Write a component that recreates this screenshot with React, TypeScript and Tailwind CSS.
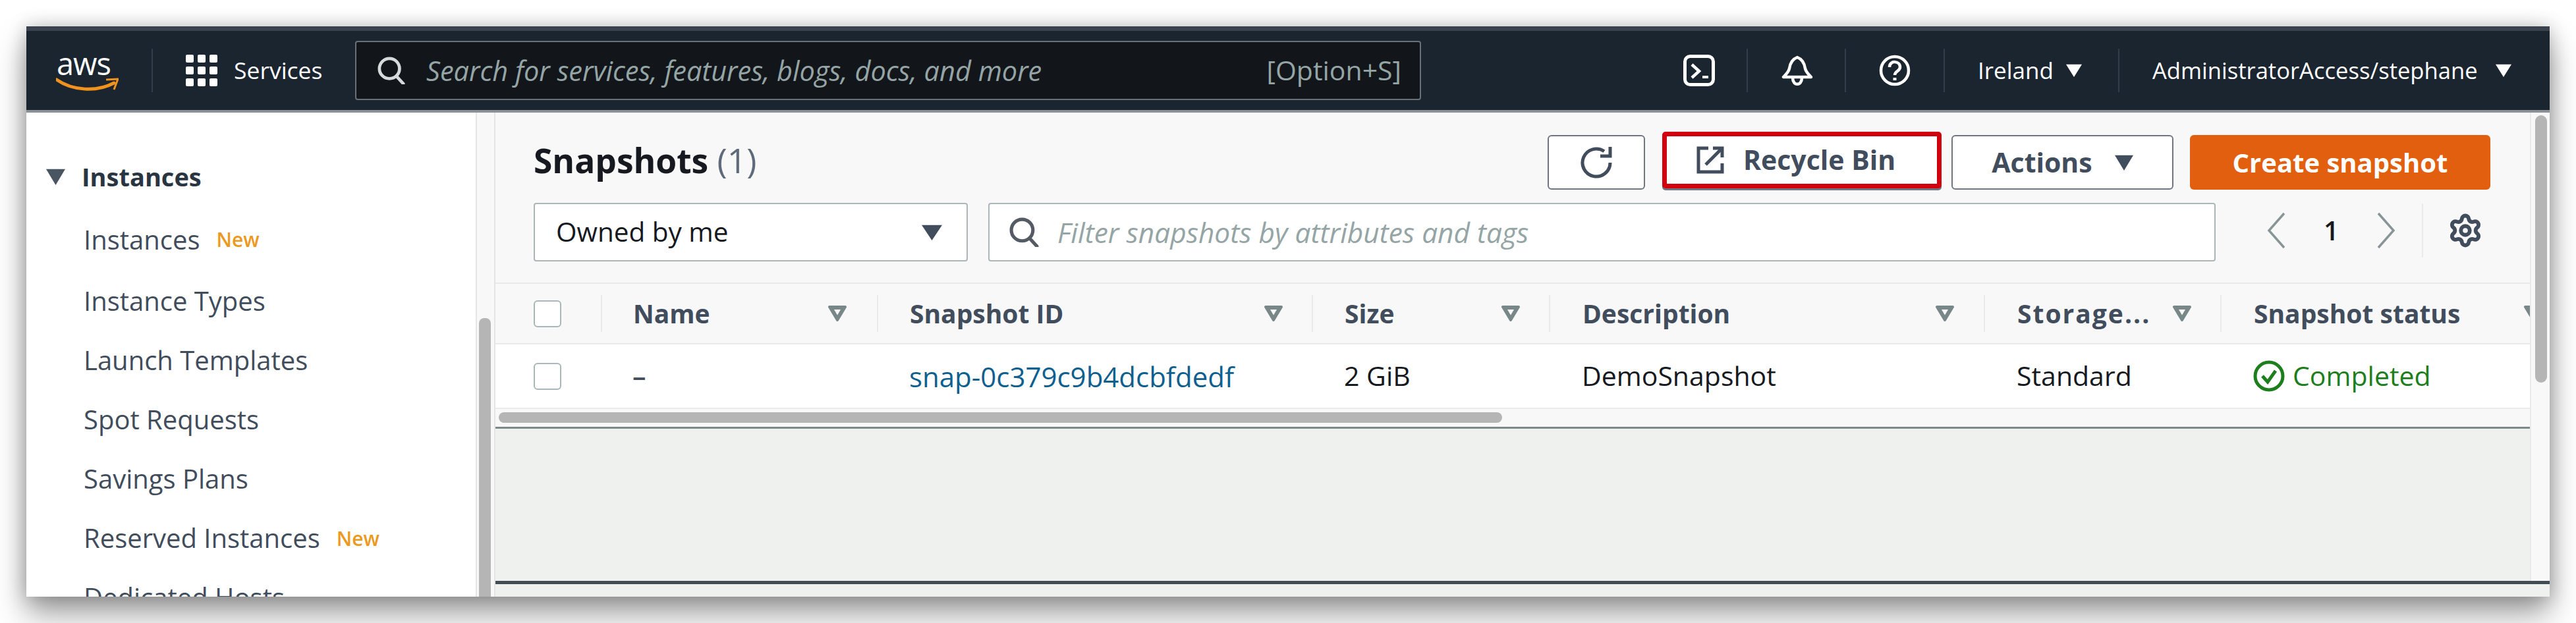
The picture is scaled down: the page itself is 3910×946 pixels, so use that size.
import { Settings } from 'lucide-react';

function Caret({ className }: { className: string }) {
  return (
    <svg viewBox="0 0 24 30" preserveAspectRatio="none" className={`${className} shrink-0`} fill="currentColor">
      <path d="M0 1h24L12 30z" />
    </svg>
  );
}

function FilterIcon() {
  return (
    <svg viewBox="0 0 30 26" className="w-[30px] h-[26px] text-[#788787] shrink-0" fill="none">
      <path d="M3 3h24L15 23z" fill="currentColor" stroke="currentColor" strokeWidth="4" strokeLinejoin="round" />
      <path d="M10 7h10l-5 8.500z" fill="#f8f8f8" />
    </svg>
  );
}

function SearchIcon({ className }: { className: string }) {
  return (
    <svg viewBox="0 0 44 44" className={`${className} shrink-0`} fill="none" stroke="currentColor" strokeWidth="5">
      <circle cx="19" cy="19" r="16" />
      <path d="M30 31l11 12" strokeLinecap="round" />
    </svg>
  );
}

function NavDivider() {
  return <div className="w-[2px] h-[66px] bg-[#333d49] shrink-0" />;
}

const navItems = ['Instance Types', 'Launch Templates', 'Spot Requests', 'Savings Plans'];

const columns = [
  { label: 'Name', w: 'w-[419px]', pad: 'pl-[47px] pr-[45px]', extra: '' },
  { label: 'Snapshot ID', w: 'w-[660px]', pad: 'pl-[48px] pr-[43px]', extra: '' },
  { label: 'Size', w: 'w-[360px]', pad: 'pl-[48px] pr-[43px]', extra: '' },
  { label: 'Description', w: 'w-[660px]', pad: 'pl-[49px] pr-[44px]', extra: '' },
  { label: 'Storage...', w: 'w-[359px]', pad: 'pl-[49px] pr-[43px]', extra: 'tracking-[2px]' },
];

export default function App() {
  return (
    <div className="w-[3910px] h-[946px] bg-white pl-[40px] pt-[40px] font-['Open_Sans',sans-serif] overflow-hidden">
      <div className="w-[3830px] h-[866px] flex flex-col overflow-hidden bg-white shadow-[0_0_26px_rgba(0,0,0,0.22),0_26px_44px_rgba(0,0,0,0.38)]">
        {/* top bar */}
        <header className="h-[131px] shrink-0 bg-[#1b2530] border-t-[7px] border-t-[#3a434d] border-b-[4px] border-b-[#8b9196] flex items-center text-white">
          <div className="w-[190px] pl-[45px] shrink-0 flex flex-col items-start">
            <span className="text-[47px] leading-[44px] tracking-[-1px] pl-[1px] font-normal">aws</span>
            <svg viewBox="0 0 95 22" className="w-[95px] h-[22px]" fill="none">
              <path d="M1 3C25 20 62 22 88 8" stroke="#f0931e" strokeWidth="5" strokeLinecap="round" />
              <path d="M76 3l18-1-6 16" stroke="#f0931e" strokeWidth="3" strokeLinejoin="round" />
            </svg>
          </div>
          <NavDivider />
          <div className="ml-[50px] w-[48px] grid grid-cols-3 gap-[6px] shrink-0">
            {Array.from({ length: 9 }).map((_, i) => (
              <span key={i} className="w-[12px] h-[12px] bg-white rounded-[2px]" />
            ))}
          </div>
          <span className="ml-[25px] w-[184px] text-[35.500px] shrink-0">Services</span>
          <div className="w-[1618px] h-[90px] shrink-0 flex items-center bg-[#121519] border-[2px] border-[#687078] rounded-[4px] pl-[32px] pr-[28px]">
            <SearchIcon className="w-[42px] h-[42px] text-[#d5dbdb]" />
            <span className="ml-[32px] flex-1 italic text-[#95a5a6] text-[41.500px]">Search for services, features, blogs, docs, and more</span>
            <span className="text-[#95a5a6] text-[41px]">[Option+S]</span>
          </div>
          {/* cloudshell */}
          <svg viewBox="0 0 48 48" className="ml-[398px] w-[48px] h-[48px] shrink-0" fill="none" stroke="white" strokeWidth="5">
            <rect x="2.500" y="2.500" width="43" height="43" rx="8" />
            <path d="M13 15l11 10-11 10" strokeWidth="4.500" />
            <path d="M29 34h9" strokeWidth="4" />
          </svg>
          <div className="ml-[48px]"><NavDivider /></div>
          {/* bell */}
          <svg viewBox="0 0 48 48" className="ml-[51px] w-[48px] h-[48px] shrink-0" fill="none" stroke="white" strokeWidth="4.500" strokeLinejoin="round">
            <path d="M24 4c-8 3-11 10-12 17-1 5-5 9-9 13h42c-4-4-8-8-9-13-1-7-4-14-12-17z" />
            <path d="M17 35c0 13 14 13 14 0" />
          </svg>
          <div className="ml-[48px]"><NavDivider /></div>
          {/* help */}
          <svg viewBox="0 0 48 48" className="ml-[50px] w-[48px] h-[48px] shrink-0" fill="none" stroke="white" strokeWidth="4.500">
            <circle cx="24" cy="24" r="21" />
            <path d="M16 19c0-11 16-10 16 0 0 6-8 6-8 12" />
            <path d="M24 35v4" strokeWidth="5" />
          </svg>
          <div className="ml-[50px]"><NavDivider /></div>
          <span className="ml-[50px] w-[114px] text-[35px] shrink-0">Ireland</span>
          <Caret className="ml-[20px] w-[24px] h-[20px]" />
          <div className="ml-[55px]"><NavDivider /></div>
          <span className="ml-[50px] w-[501px] text-[34.600px] shrink-0">AdministratorAccess/stephane</span>
          <Caret className="ml-[20px] w-[24px] h-[20px]" />
        </header>

        <div className="flex-1 min-h-0 flex">
          {/* side navigation */}
          <aside className="w-[682px] shrink-0 overflow-hidden pt-[72px] text-[#414d5c] text-[40px]">
            <div className="h-[50px] flex items-center pl-[30px] text-[38px] font-bold text-[#2a3542]">
              <Caret className="w-[29px] h-[25px] text-[#4a5562]" />
              <span className="ml-[25px]">Instances</span>
            </div>
            <div className="mt-[22px] h-[97px] flex items-center pl-[87px]">
              Instances<span className="ml-[25px] text-[30px] font-semibold text-[#ec9a1f]">New</span>
            </div>
            {navItems.map((label) => (
              <div key={label} className="h-[90px] flex items-center pl-[87px]">{label}</div>
            ))}
            <div className="h-[90px] flex items-center pl-[87px]">
              Reserved Instances<span className="ml-[25px] text-[30px] font-semibold text-[#ec9a1f]">New</span>
            </div>
            <div className="h-[90px] flex items-center pl-[87px]">Dedicated Hosts</div>
          </aside>
          <div className="w-[30px] shrink-0 bg-[#f8f8f8] border-x-[2px] border-[#e4e6e6] pl-[3px] pt-[312px]">
            <div className="w-[18px] h-full rounded-t-[8px] bg-[#b5b5b5]" />
          </div>

          {/* main */}
          <main className="flex-1 min-w-0 flex flex-col">
            <div className="flex-1 min-h-0 flex">
              <div className="flex-1 min-w-0 flex flex-col bg-[#f8f8f8]">
                <div className="h-[260px] shrink-0 pl-[58px] pt-[34px] border-b-[2px] border-[#e9ebeb]">
                  <div className="flex items-start">
                    <h1 className="flex-1 pt-[8px] text-[51.500px] leading-[60px] font-bold text-[#16191f]">
                      Snapshots <span className="font-normal text-[#5f6b7a]">(1)</span>
                    </h1>
                    <button className="w-[148px] h-[83px] bg-white border-[2px] border-[#6f7680] rounded-[6px] flex items-center justify-center">
                      <svg viewBox="0 0 48 48" className="w-[48px] h-[48px] text-[#414d5c]" fill="none" stroke="currentColor" strokeWidth="5">
                        <path d="M36 6.800A21 21 0 1 0 45 24" />
                        <path d="M30 14h15V0" />
                      </svg>
                    </button>
                    <button className="ml-[26px] w-[424px] h-[86px] -mt-[5px] bg-white border-[7px] border-[#d0000f] rounded-[5px] shadow-[0_3px_0_#6f7680] flex items-center pl-[45px] text-[#414d5c] text-[41px] font-bold">
                      <svg viewBox="0 0 42 42" className="w-[42px] h-[42px] shrink-0" fill="none" stroke="currentColor" strokeWidth="5">
                        <path d="M18 3H3v36h36V26" />
                        <path d="M14 28L39 3" />
                        <path d="M25 3h14v14" />
                      </svg>
                      <span className="ml-[29px]">Recycle Bin</span>
                    </button>
                    <button className="ml-[15px] w-[337px] h-[83px] bg-white border-[2px] border-[#6f7680] rounded-[6px] flex items-center justify-center gap-[34px] text-[#414d5c] text-[41px] font-bold">
                      Actions <Caret className="w-[28px] h-[24px]" />
                    </button>
                    <button className="ml-[25px] mr-[60px] w-[456px] h-[83px] bg-[#e25f10] rounded-[6px] text-white text-[40px] font-bold">
                      Create snapshot
                    </button>
                  </div>
                  <div className="mt-[20px] flex items-center">
                    <div className="w-[659px] h-[89px] bg-white border-[2px] border-[#aab7b8] rounded-[4px] flex items-center justify-between pl-[32px] pr-[37px] text-[#16191f] text-[40.500px]">
                      Owned by me <Caret className="w-[31px] h-[24px] text-[#414d5c]" />
                    </div>
                    <div className="ml-[31px] w-[1863px] h-[89px] bg-white border-[2px] border-[#aab7b8] rounded-[4px] flex items-center pl-[30px]">
                      <SearchIcon className="w-[45px] h-[45px] text-[#545b64]" />
                      <span className="ml-[28px] italic text-[#95a5a6] text-[42.400px]">Filter snapshots by attributes and tags</span>
                    </div>
                    {/* pagination */}
                    <div className="ml-[77px] flex items-center -mt-[6px]">
                      <svg viewBox="0 0 30 56" className="w-[30px] h-[56px] text-[#879596] shrink-0" fill="none">
                        <path d="M27 2L4 28l23 26" stroke="currentColor" strokeWidth="3.500" />
                      </svg>
                      <span className="ml-[57px] w-[23px] text-[40px] font-semibold text-[#16191f]">1</span>
                      <svg viewBox="0 0 30 56" className="ml-[57px] w-[30px] h-[56px] text-[#879596] shrink-0" fill="none">
                        <path d="M3 2l23 26L3 54" stroke="currentColor" strokeWidth="3.500" />
                      </svg>
                      <div className="ml-[39px] w-[2px] h-[82px] bg-[#e9ebeb] shrink-0" />
                      <Settings className="ml-[37px] w-[54px] h-[54px] text-[#414d5c] shrink-0" strokeWidth={2.6} />
                    </div>
                  </div>
                </div>

                {/* table */}
                <div className="h-[92px] shrink-0 flex items-center border-b-[2px] border-[#e9ebeb] text-[#414d5c] text-[39px] font-bold overflow-hidden">
                  <div className="w-[160px] shrink-0 pl-[58px]">
                    <span className="block w-[42px] h-[41px] bg-white border-[2px] border-[#aab7b8] rounded-[6px]" />
                  </div>
                  {columns.map((col) => (
                    <div key={col.label} className={`${col.w} ${col.pad} shrink-0 h-[56px] flex items-center justify-between border-l-[2px] border-[#e9ebeb]`}>
                      <span className={col.extra}>{col.label}</span>
                      <FilterIcon />
                    </div>
                  ))}
                  <div className="flex-1 pl-[49px] h-[56px] flex items-center border-l-[2px] border-[#e9ebeb] whitespace-nowrap">
                    Snapshot status
                    <span className="ml-[96px]"><FilterIcon /></span>
                  </div>
                </div>
                <div className="h-[98px] shrink-0 flex items-center bg-white text-[#16191f] text-[41px] border-b-[2px] border-[#e9ebeb]">
                  <div className="w-[208px] shrink-0 pl-[58px]">
                    <span className="block w-[42px] h-[41px] bg-white border-[2px] border-[#aab7b8] rounded-[6px]" />
                  </div>
                  <div className="w-[420px] shrink-0 font-semibold text-[#414d5c]">–</div>
                  <div className="w-[660px] shrink-0 text-[#0f5f8f] text-[42px]">snap-0c379c9b4dcbfdedf</div>
                  <div className="w-[361px] shrink-0">2 GiB</div>
                  <div className="w-[660px] shrink-0">DemoSnapshot</div>
                  <div className="w-[359px] shrink-0">Standard</div>
                  <div className="flex items-center text-[#1d7e1d]">
                    <svg viewBox="0 0 48 48" className="w-[48px] h-[48px] shrink-0" fill="none" stroke="currentColor" strokeWidth="5">
                      <circle cx="24" cy="24" r="21" />
                      <path d="M14 24l8 9 12-17" />
                    </svg>
                    <span className="ml-[12px]">Completed</span>
                  </div>
                </div>
                <div className="h-[30px] shrink-0 px-[5px] pt-[5px] bg-[#f8f8f8] border-b-[3px] border-[#7d8a8a]">
                  <div className="w-[1523px] h-[16px] rounded-[8px] bg-[#b5b5b5]" />
                </div>
                <div className="flex-1 bg-[#eff1ef]" />
              </div>
              <div className="w-[30px] shrink-0 bg-[#f8f8f8] border-l-[2px] border-[#e9ebeb] pl-[6px] pt-[4px]">
                <div className="w-[18px] h-[406px] rounded-[9px] bg-[#b5b5b5]" />
              </div>
            </div>
            <div className="h-[24px] shrink-0 bg-[#eff1ef] border-t-[5px] border-[#414d55]" />
          </main>
        </div>
      </div>
    </div>
  );
}
